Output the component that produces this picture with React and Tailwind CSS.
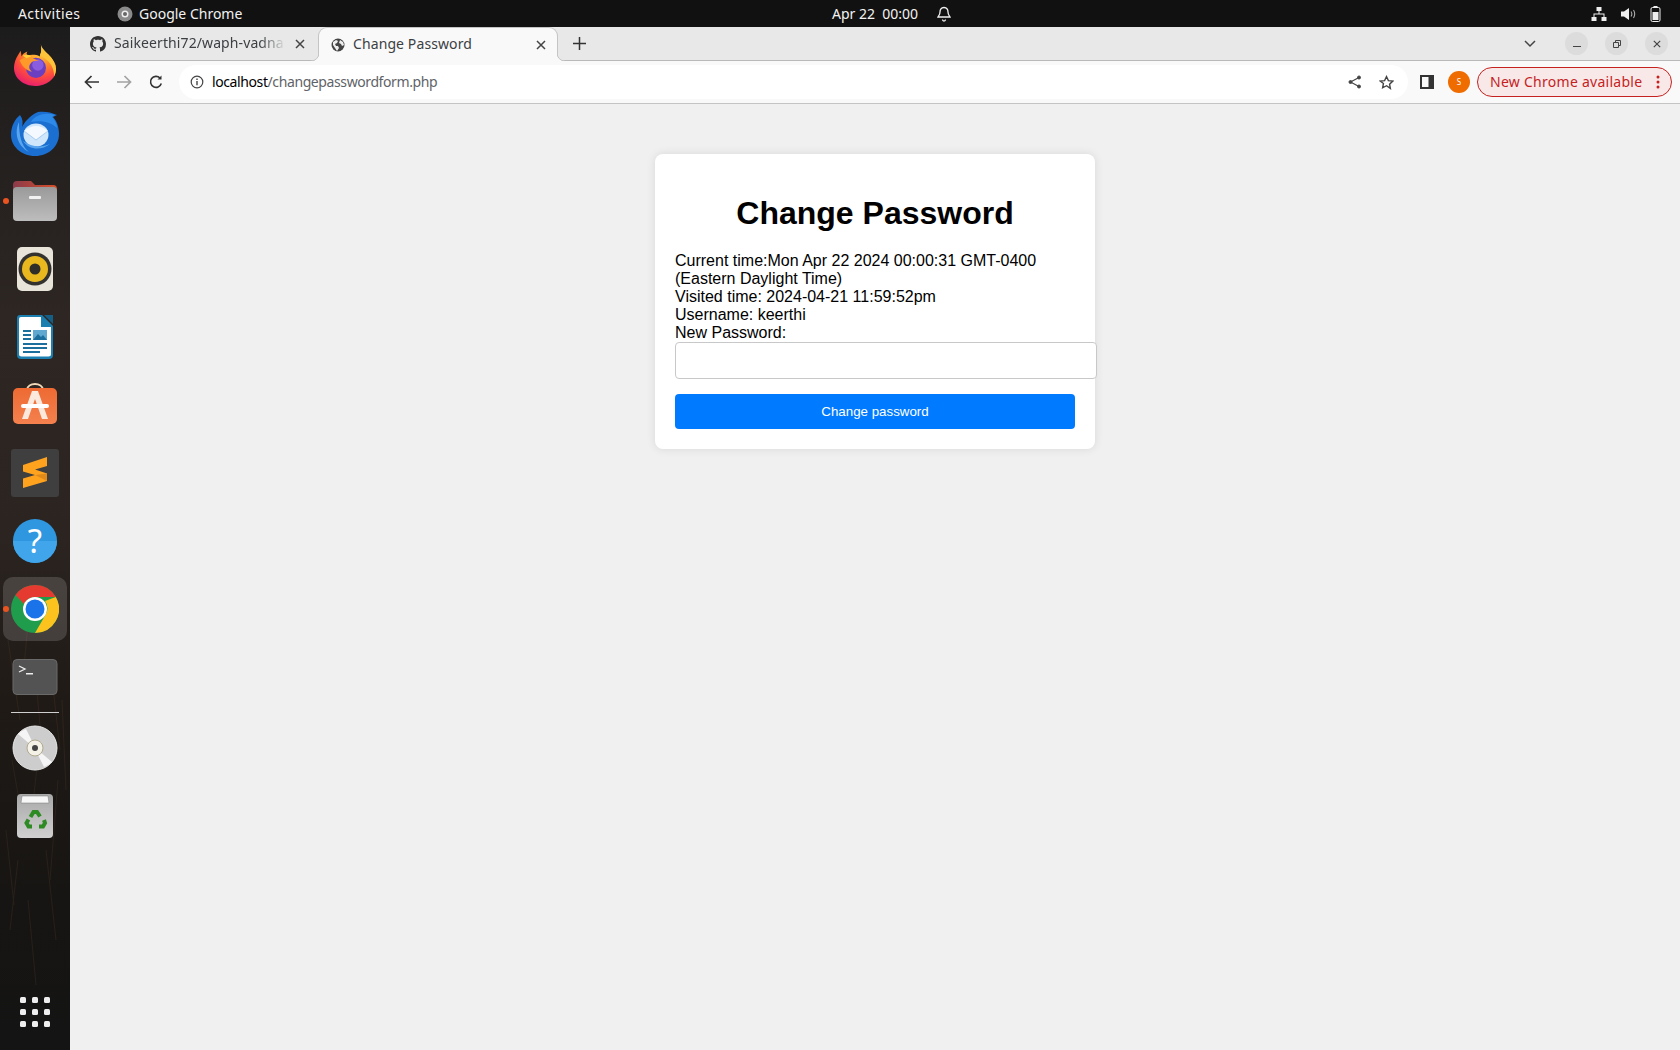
const ui = { fontFamily: '"Noto Sans", sans-serif' };

function Firefox() {
  return (
    <svg width="44" height="44" viewBox="0 0 46 46">
      <defs>
        <radialGradient id="ff1" cx="0.65" cy="0.1" r="1">
          <stop offset="0" stopColor="#ffe24a" /><stop offset="0.35" stopColor="#ff9a2a" /><stop offset="0.65" stopColor="#ff4f3a" /><stop offset="1" stopColor="#e3137a" />
        </radialGradient>
      </defs>
      <path d="M29 1c1 5 4 7 8 11 5 5 8 10 8 15 0 11-10 18-22 18S1 37 1 26c0-5 2-10 4-13l3-5 1 6c1-2 3-4 6-5-1 2-1 3 0 4 4-1 9-1 13 1 2-4 2-9 1-13z" fill="url(#ff1)" />
      <path d="M29 1c1 5 4 7 8 11 5 5 8 10 8 15 0 3-1 6-2 8 0-9-4-15-10-19-3-2-4-3-5-3 2-4 2-8 1-12z" fill="#ffc53a" />
      <circle cx="24" cy="26" r="10.500" fill="#6a3fc0" />
      <circle cx="26" cy="23" r="6" fill="#8a5ce0" />
      <path d="M7 18c4-3 10-4 14-2l7 3c-5-1-8 0-10 3-2 3-1 6 2 8-6-1-11-6-13-12z" fill="#ff9a2a" />
      <path d="M10 13c3-1 6-1 9 1l-5 2z" fill="#ffcf3a" />
    </svg>
  );
}
function Thunderbird() {
  return (
    <svg width="48" height="46" viewBox="0 0 48 46">
      <path d="M9 5C12 9 12 13 11 17 14 12 18 6 27 2 33 1 40 2 46 5L42 7C46 11 48 18 48 24 48 36 38 46 24 46 10 46 0 36 0 25 0 16 4 9 9 5z" fill="#1a6fd0" />
      <path d="M8 12C3 22 6 36 18 42 10 36 8 24 8 12z" fill="#5aa6ee" />
      <path d="M20 12C24 5 34 2 44 5L41 7C44 10 46 14 46 18 40 12 30 10 20 12z" fill="#2e8ae8" />
      <ellipse cx="25" cy="25" rx="12.500" ry="11.500" fill="#cfe6fb" />
      <path d="M13 21l12 9 12-9c-3-3-8-5-12-5s-9 2-12 5z" fill="#f3f9ff" />
      <path d="M13 21l12 9 12-9" fill="none" stroke="#a9cdf0" strokeWidth="1" />
      <path d="M12 31c6 9 18 10 27 3-9 4-19 3-27-3z" fill="#5aa6ee" />
    </svg>
  );
}
function Files() {
  return (
    <svg width="46" height="44" viewBox="0 0 46 44">
      <defs>
        <linearGradient id="fo" x1="0" x2="1"><stop offset="0" stopColor="#8a3a4a" /><stop offset="1" stopColor="#d9502a" /></linearGradient>
        <linearGradient id="fg" x1="0" x2="0" y1="0" y2="1"><stop offset="0" stopColor="#9a9a9a" /><stop offset="1" stopColor="#bdbdbd" /></linearGradient>
      </defs>
      <path d="M1 6a4 4 0 0 1 4-4h14l4 4h18a4 4 0 0 1 4 4v8H1z" fill="url(#fo)" />
      <rect x="1" y="8" width="44" height="34" rx="4" fill="url(#fg)" />
      <rect x="17" y="17" width="12" height="3" rx="1" fill="#f2f2f2" />
    </svg>
  );
}
function Rhythmbox() {
  return (
    <svg width="38" height="46" viewBox="0 0 38 46">
      <rect x="1" y="1" width="36" height="44" rx="5" fill="#e8e4da" />
      <circle cx="19" cy="23" r="16.500" fill="#33322f" />
      <circle cx="19" cy="23" r="13" fill="#e8b81e" />
      <circle cx="19" cy="23" r="5.500" fill="#2e2d2a" />
    </svg>
  );
}
function Writer() {
  return (
    <svg width="38" height="46" viewBox="0 0 38 46">
      <path d="M4 1h22l11 11v29a4 4 0 0 1-4 4H5a4 4 0 0 1-4-4V4a3 3 0 0 1 3-3z" fill="#1b7fb0" />
      <path d="M5 3h20v10h10v27a2.500 2.500 0 0 1-2.500 2.500h-27A2.500 2.500 0 0 1 3 40V5a2 2 0 0 1 2-2z" fill="#fff" />
      <path d="M28 1h9v9z" fill="#155f86" />
      <rect x="7" y="16" width="8" height="2" fill="#1b6f9c" /><rect x="7" y="20" width="8" height="2" fill="#1b6f9c" /><rect x="7" y="24" width="8" height="2" fill="#1b6f9c" />
      <rect x="17" y="16" width="14" height="10" fill="#5fa8cf" />
      <path d="M17 26l5-6 3 3 2-2 4 5z" fill="#1b6f9c" />
      <rect x="7" y="29" width="24" height="2" fill="#1b6f9c" /><rect x="7" y="33" width="24" height="2" fill="#1b6f9c" /><rect x="7" y="37" width="17" height="2" fill="#1b6f9c" />
    </svg>
  );
}
function Software() {
  return (
    <svg width="46" height="42" viewBox="0 0 46 42" className="-mt-[3px]">
      <defs><linearGradient id="sw" x1="0" x2="0" y1="0" y2="1"><stop offset="0" stopColor="#ee6a33" /><stop offset="1" stopColor="#f4814e" /></linearGradient></defs>
      <path d="M15 7c0-8 16-8 16 0" fill="none" stroke="#efd9b8" strokeWidth="1.800" />
      <rect x="1" y="5" width="44" height="36" rx="5" fill="url(#sw)" />
      <path d="M20 8h6l10 28h-6l-7-20-7 20h-6z" fill="#fbe9dd" />
      <rect x="9" y="21" width="28" height="4" rx="2" fill="#fff" />
    </svg>
  );
}
function Sublime() {
  return (
    <svg width="48" height="48" viewBox="0 0 48 48">
      <rect width="48" height="48" rx="3" fill="#3f3f3f" />
      <path d="M12 16L36 8V17L24 20.500 36 24.500V32L12 39V29.500L24 26 12 22.500z" fill="#ffa31f" />
      <path d="M24 26L36 24.500V32z" fill="#e08a1a" />
    </svg>
  );
}
function Help() {
  return (
    <svg width="46" height="46" viewBox="0 0 46 46">
      <circle cx="23" cy="23" r="22" fill="#2f97e0" />
      <path d="M1 23a22 22 0 0 0 44 0z" fill="#40a5ea" />
      <text x="23" y="35" textAnchor="middle" fontSize="33" fill="#fff" fontFamily='"Noto Sans", sans-serif'>?</text>
    </svg>
  );
}
function Chrome() {
  return (
    <svg width="48" height="48" viewBox="0 0 48 48">
      <circle cx="24" cy="24" r="24" fill="#1f9d4d" />
      <path d="M24 0a24 24 0 0 1 20.800 12H24a12 12 0 0 0-11 7L4.500 10A24 24 0 0 1 24 0z" fill="#e53a2f" />
      <path d="M44.800 12A24 24 0 0 1 24 48l10.400-18A12 12 0 0 0 34 16z" fill="#fcc31e" />
      <circle cx="24" cy="24" r="12" fill="#fff" />
      <circle cx="24" cy="24" r="9.500" fill="#1a73e8" />
    </svg>
  );
}
function Terminal() {
  return (
    <svg width="46" height="36" viewBox="0 0 46 36">
      <rect x="1" y="0.500" width="44" height="35" rx="4" fill="#535353" stroke="#6a6a6a" />
      <path d="M7 7l6 3-6 3" fill="none" stroke="#eee" strokeWidth="1.300" />
      <rect x="14" y="14" width="7" height="1.500" fill="#eee" />
    </svg>
  );
}
function Disc() {
  return (
    <svg width="46" height="46" viewBox="0 0 46 46">
      <circle cx="23" cy="23" r="22" fill="#cdcdcd" stroke="#e8e8e8" />
      <path d="M6 9a22 22 0 0 1 8-5l7 14-2 2z" fill="#f5f5f5" />
      <path d="M40 37a22 22 0 0 1-8 5l-7-14 2-2z" fill="#f5f5f5" />
      <circle cx="23" cy="23" r="8" fill="#f4f1e6" stroke="#b0a98f" />
      <circle cx="23" cy="23" r="3" fill="#444" />
    </svg>
  );
}
function Trash() {
  return (
    <svg width="38" height="46" viewBox="0 0 38 46">
      <defs><linearGradient id="tr" x1="0" x2="0" y1="0" y2="1"><stop offset="0" stopColor="#a8a8a8" /><stop offset="1" stopColor="#d0d0d0" /></linearGradient></defs>
      <rect x="1" y="1" width="36" height="44" rx="4" fill="url(#tr)" />
      <path d="M5 10l1-7h26l1 7z" fill="#f7f7f7" stroke="#777" strokeWidth="0.500" />
      <g fill="none" stroke="#2e8b24" strokeWidth="4">
        <path d="M14.500 24l3-5h3.500l3 4.500" />
        <path d="M28 27l1 3-2 3.500h-4" />
        <path d="M16 33.500h-3.500l-2-3.500 2-3.500" />
      </g>
    </svg>
  );
}
function Dots() {
  return (
    <svg width="30" height="30" viewBox="0 0 30 30" fill="#eeeeee">
      {[0, 12, 24].flatMap((y) => [0, 12, 24].map((x) => <rect key={x + "-" + y} x={x} y={y} width="6" height="6" rx="1.500" />))}
    </svg>
  );
}

function GitHub() {
  return (
    <svg width="16" height="16" viewBox="0 0 16 16" fill="#333">
      <path d="M8 0C3.580 0 0 3.580 0 8c0 3.540 2.290 6.530 5.470 7.590.4.070.55-.17.55-.38 0-.19-.01-.82-.01-1.490-2.010.37-2.530-.49-2.690-.94-.09-.23-.48-.94-.82-1.130-.28-.15-.68-.52-.01-.53.630-.01 1.080.58 1.230.82.720 1.210 1.870.87 2.330.66.070-.52.280-.87.510-1.070-1.780-.2-3.640-.89-3.640-3.950 0-.87.310-1.590.82-2.150-.08-.2-.36-1.020.08-2.120 0 0 .67-.21 2.200.82.640-.18 1.320-.27 2-.27s1.360.09 2 .27c1.530-1.040 2.200-.82 2.200-.82.440 1.100.16 1.920.08 2.120.51.560.82 1.270.82 2.150 0 3.070-1.870 3.750-3.650 3.950.29.250.54.730.54 1.480 0 1.070-.01 1.930-.01 2.200 0 .21.150.46.550.38A8.010 8.010 0 0 0 16 8c0-4.420-3.580-8-8-8z" />
    </svg>
  );
}
function Globe() {
  return (
    <svg width="14" height="14" viewBox="0 0 14 14">
      <circle cx="7" cy="7" r="6.500" fill="#444" />
      <path d="M2 4l3-2 2 1-1 2-2 1 1 2 2 0 1 2-2 3-2-3-2-3zM9 2l3 2 1 3-2 1-1-2-2-1z" fill="#eee" />
    </svg>
  );
}
function X({ c = "#444", s = 10 }) {
  return (
    <svg width={s} height={s} viewBox="0 0 10 10" stroke={c} strokeWidth="1.500" fill="none">
      <path d="M1 1l8 8M9 1l-8 8" />
    </svg>
  );
}

function TopBar() {
  return (
    <div className="h-[27px] bg-[#111111] flex items-center relative text-[#f2f2f2] text-[14px] shrink-0" style={ui}>
      <span className="ml-[18px] w-[99px] tracking-[0.4px] -mt-px">Activities</span>
      <svg width="16" height="16" viewBox="0 0 16 16" className="mr-[6px]">
        <circle cx="8" cy="8" r="7.500" fill="#8a8a8a" />
        <circle cx="8" cy="8" r="3.500" fill="#eee" />
        <circle cx="8" cy="8" r="2" fill="#666" />
      </svg>
      <span className="-mt-px">Google Chrome</span>
      <div className="absolute left-[832px] top-0 h-[27px] flex items-center gap-[18px]">
        <span className="-mt-px">Apr 22&nbsp; 00:00</span>
        <svg width="16" height="16" viewBox="0 0 16 16" fill="none" stroke="#eee" strokeWidth="1.300">
          <path d="M8 1.500c-3 0-4 2-4 4.500 0 3-1.500 4-2 5h12c-.5-1-2-2-2-5 0-2.500-1-4.500-4-4.500z" />
          <path d="M6.500 13.500a1.500 1.500 0 0 0 3 0" />
        </svg>
      </div>
      <div className="ml-auto flex items-center gap-[14px] mr-[19px]">
        <svg width="16" height="14" viewBox="0 0 16 14" fill="#eee">
          <rect x="5.500" y="0" width="5" height="4" /><rect x="0.500" y="10" width="5" height="4" /><rect x="10.500" y="10" width="5" height="4" />
          <path d="M7.500 4h1v2.500H13.500V10h-1V7.500h-9V10h-1V6.500h5z" />
        </svg>
        <svg width="15" height="14" viewBox="0 0 15 14" fill="#eee">
          <path d="M0 4.500h3L8 1v12L3 9.500H0z" />
          <path d="M10 4.500c1 1.500 1 3.500 0 5M12.500 3c1.500 2.500 1.500 5.500 0 8" fill="none" stroke="#aaa" strokeWidth="1.100" />
        </svg>
        <svg width="11" height="16" viewBox="0 0 11 16">
          <rect x="3.500" y="0" width="4" height="2" fill="#eee" />
          <rect x="1" y="1.500" width="9" height="14" rx="1.500" fill="none" stroke="#eee" />
          <rect x="2.500" y="6" width="6" height="8" fill="#eee" />
        </svg>
      </div>
    </div>
  );
}

const streaks = [
  [8, 640, 20, 720], [30, 600, 22, 690], [50, 660, 60, 750], [12, 760, 26, 840], [40, 740, 30, 830], [58, 780, 50, 880],
  [18, 860, 10, 930], [46, 850, 56, 940], [28, 900, 36, 985], [62, 700, 66, 790], [6, 830, 14, 905], [36, 680, 44, 770],
];

function Dock() {
  const Slot = ({ children, dot, active }) => (
    <div className="relative h-[68px] w-[70px] flex items-center justify-center">
      {active && <div className="absolute left-[3px] top-[2px] w-[64px] h-[64px] rounded-[10px] bg-[#ffffff26]" />}
      {dot && <div className="absolute left-[3px] top-[31px] w-[6px] h-[6px] rounded-full bg-[#e95420]" />}
      <div className="relative flex">{children}</div>
    </div>
  );
  return (
    <div className="relative w-[70px] shrink-0 flex flex-col items-center pt-[4px] bg-[linear-gradient(to_bottom,#1d1c1c_0%,#2d2623_28%,#2b2421_50%,#1f1a16_66%,#171513_85%,#141414_100%)]">
      <svg width="70" height="1023" viewBox="0 27 70 1023" className="absolute left-0 top-0" fill="none" stroke="#4a3524" strokeWidth="1" opacity="0.35">
        {streaks.map((s, i) => <line key={i} x1={s[0]} y1={s[1]} x2={s[2]} y2={s[3]} />)}
      </svg>
      <Slot><Firefox /></Slot>
      <Slot><Thunderbird /></Slot>
      <Slot dot><Files /></Slot>
      <Slot><Rhythmbox /></Slot>
      <Slot><Writer /></Slot>
      <Slot><Software /></Slot>
      <Slot><Sublime /></Slot>
      <Slot><Help /></Slot>
      <Slot dot active><Chrome /></Slot>
      <Slot><Terminal /></Slot>
      <div className="relative w-[48px] h-px bg-[#cfcfcf] mt-px mb-[1px]" />
      <Slot><Disc /></Slot>
      <Slot><Trash /></Slot>
      <div className="relative mt-auto mb-[23px] flex"><Dots /></div>
    </div>
  );
}

function TabStrip() {
  return (
    <div className="h-[34px] bg-[#e8e8e8] border-b border-[#b9b9b9] flex items-center shrink-0 text-[14px] text-[#3c4043]" style={ui}>
      <div className="w-[248px] h-[33px] flex items-center pl-[20px] shrink-0">
        <GitHub />
        <span className="ml-[8px] w-[172px] whitespace-nowrap overflow-hidden -mt-[2px] tracking-[0.1px]" style={{ maskImage: "linear-gradient(to right,#000 85%,transparent)" }}>Saikeerthi72/waph-vadna</span>
        <span className="ml-[9px] flex"><X /></span>
      </div>
      <div className="relative h-[34px] w-[240px] bg-[#f9f9f9] border border-b-0 border-[#c4c4c4] rounded-t-[9px] flex items-center pl-[12px] shrink-0 mt-[1px]">
        <svg width="8" height="8" viewBox="0 0 8 8" className="absolute -left-[8px] bottom-0">
          <path d="M8 0A8 8 0 0 1 0 8H8z" fill="#f9f9f9" />
          <path d="M8 0A8 8 0 0 1 0 8" fill="none" stroke="#c4c4c4" />
        </svg>
        <svg width="8" height="8" viewBox="0 0 8 8" className="absolute -right-[8px] bottom-0">
          <path d="M0 0A8 8 0 0 0 8 8H0z" fill="#f9f9f9" />
          <path d="M0 0A8 8 0 0 0 8 8" fill="none" stroke="#c4c4c4" />
        </svg>
        <Globe />
        <span className="ml-[8px] w-[178px] whitespace-nowrap -mt-[2px] tracking-[0.1px]">Change Password</span>
        <span className="ml-[5px] flex"><X /></span>
      </div>
      <svg width="13" height="13" viewBox="0 0 13 13" stroke="#333" strokeWidth="1.500" className="ml-[15px]"><path d="M6.500 0v13M0 6.500h13" /></svg>
      <div className="ml-auto flex items-center pr-[12px]">
        <svg width="12" height="8" viewBox="0 0 12 8" fill="none" stroke="#444" strokeWidth="1.500" className="mr-[29px]"><path d="M1 1l5 5 5-5" /></svg>
        <div className="w-[23px] h-[23px] rounded-full bg-[#dcdcdc] flex items-center justify-center mr-[17px]">
          <svg width="8" height="8" viewBox="0 0 8 8" stroke="#444" strokeWidth="1"><path d="M0 6.500h8" /></svg>
        </div>
        <div className="w-[23px] h-[23px] rounded-full bg-[#dcdcdc] flex items-center justify-center mr-[17px]">
          <svg width="8" height="8" viewBox="0 0 8 8" stroke="#444" fill="none"><path d="M.5 2.500h5v5h-5zM2.500 2.500v-2h5v5h-2" /></svg>
        </div>
        <div className="w-[23px] h-[23px] rounded-full bg-[#dcdcdc] flex items-center justify-center">
          <X s={8} />
        </div>
      </div>
    </div>
  );
}

function Toolbar() {
  return (
    <div className="h-[43px] bg-[#f9f9f9] border-b border-[#c4c4c4] flex items-center shrink-0" style={ui}>
      <svg width="16" height="14" viewBox="0 0 16 14" fill="none" stroke="#333" strokeWidth="1.700" className="ml-[14px]"><path d="M15 7H2M7.500 1L1.500 7l6 6" /></svg>
      <svg width="16" height="14" viewBox="0 0 16 14" fill="none" stroke="#a3a3a3" strokeWidth="1.700" className="ml-[16px]"><path d="M1 7h13M8.500 1l6 6-6 6" /></svg>
      <svg width="14" height="14" viewBox="0 0 14 14" fill="none" stroke="#333" strokeWidth="1.600" className="ml-[17px]"><path d="M12.300 8.500A5.500 5.500 0 1 1 11 3" /><path d="M12.500 0.500v4h-4z" fill="#333" stroke="none" /></svg>
      <div className="ml-[16px] flex-1 h-[34px] bg-white rounded-full flex items-center pl-[11px] pr-[14px]">
        <svg width="14" height="14" viewBox="0 0 14 14" fill="none" stroke="#444" strokeWidth="1.200"><circle cx="7" cy="7" r="5.800" /><path d="M7 6v4.200" strokeWidth="1.400" /><path d="M7 3.500v1.400" strokeWidth="1.400" /></svg>
        <span className="ml-[8px] text-[14px] tracking-[-0.4px] text-black -mt-[2px]">localhost<span className="text-[#5f6368]">/changepasswordform.php</span></span>
        <svg width="14" height="14" viewBox="0 0 14 14" fill="#444" stroke="#444" className="ml-auto mr-[17px]"><circle cx="2.500" cy="7" r="1.500" /><circle cx="11" cy="2.500" r="1.500" /><circle cx="11" cy="11.500" r="1.500" /><path d="M11 2.500L2.500 7l8.500 4.500" fill="none" strokeWidth="1.200" /></svg>
        <svg width="15" height="15" viewBox="0 0 24 24" fill="none" stroke="#444" strokeWidth="2.200"><path d="M12 2.500l3 6.400 7 .9-5.100 4.800 1.300 6.900L12 17.200l-6.200 3.300 1.300-6.900L2 9.800l7-.9z" /></svg>
      </div>
      <svg width="14" height="14" viewBox="0 0 14 14" className="ml-[12px]"><rect width="14" height="14" fill="#333" /><rect x="2" y="2" width="6.500" height="10" fill="#f9f9f9" /></svg>
      <div className="ml-[14px] w-[22px] h-[22px] rounded-full bg-[#ef6c00] flex items-center justify-center text-white text-[8px]">S</div>
      <div className="ml-[7px] mr-[8px] w-[195px] h-[30px] rounded-full border border-[#c5221f] bg-[#f8e9e8] flex items-center pl-[12px] text-[#c5221f] text-[14px] tracking-[0.27px] whitespace-nowrap">
        <span className="-mt-[2px]">New Chrome available</span>
        <svg width="4" height="14" viewBox="0 0 4 14" fill="#c5221f" className="ml-auto mr-[11px]"><circle cx="2" cy="2" r="1.500" /><circle cx="2" cy="7" r="1.500" /><circle cx="2" cy="12" r="1.500" /></svg>
      </div>
    </div>
  );
}

function Card() {
  return (
    <div className="w-[440px] mt-[50px] bg-white rounded-[8px] p-[20px] shadow-[0_0_10px_rgba(0,0,0,0.1)] text-[16px] leading-[18px] text-black">
      <h1 className="text-[32px] leading-[37px] font-bold text-center mt-[21px] mb-[20px]">Change Password</h1>
      <form>
        <div>Current time:Mon Apr 22 2024 00:00:31 GMT-0400 (Eastern Daylight Time)</div>
        <div>Visited time: 2024-04-21 11:59:52pm</div>
        <div>Username: keerthi</div>
        <div>New Password:</div>
        <input type="password" className="block w-[422px] h-[37px] border border-[#c8c8c8] rounded-[4px] bg-white" />
        <button type="button" className="block w-[400px] h-[35px] mt-[15px] bg-[#007bff] rounded-[4px] text-white text-[13.33px] text-center">Change password</button>
      </form>
    </div>
  );
}

export default function App() {
  return (
    <div className="w-[1680px] h-[1050px] flex flex-col overflow-hidden bg-[#f0f0f0]" style={{ fontFamily: '"Liberation Sans", Arial, sans-serif' }}>
      <TopBar />
      <div className="flex-1 flex min-h-0">
        <Dock />
        <div className="flex-1 flex flex-col min-w-0">
          <TabStrip />
          <Toolbar />
          <div className="flex-1 flex justify-center items-start">
            <Card />
          </div>
        </div>
      </div>
    </div>
  );
}
